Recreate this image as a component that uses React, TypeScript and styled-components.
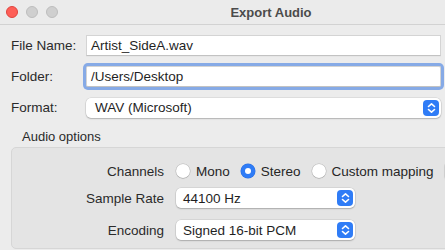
import React from "react";
import styled, { createGlobalStyle } from "styled-components";

const GlobalStyle = createGlobalStyle`
  html, body {
    margin: 0;
    padding: 0;
    overflow: hidden;
    background: #ececec;
  }
  body {
    font-family: "Liberation Sans", Arial, sans-serif;
    color: #262626;
  }
`;

const Window = styled.div`
  width: 542px;
  height: 250px;
  background: #ececec;
  display: flex;
  flex-direction: column;
`;

const TitleBar = styled.div`
  height: 24px;
  flex: none;
  position: relative;
  display: flex;
  align-items: center;
  justify-content: center;
  border-bottom: 1px solid #d2d2d2;
  background: #ebebeb;
`;

const Lights = styled.div`
  position: absolute;
  left: 6px;
  top: 6px;
  display: flex;
  gap: 8px;
`;

const Light = styled.span<{ $color: string; $edge: string }>`
  width: 12px;
  height: 12px;
  border-radius: 50%;
  box-sizing: border-box;
  background: ${({ $color }) => $color};
  border: 0.5px solid ${({ $edge }) => $edge};
`;

const Title = styled.h1`
  margin: 0;
  font-size: 13px;
  font-weight: bold;
  color: #4b4b4b;
`;

const Form = styled.div`
  display: grid;
  grid-template-columns: 75px 355px;
  grid-auto-rows: 21px;
  row-gap: 10px;
  padding: 10px 0 0 11px;
  align-items: center;
`;

const Label = styled.label`
  font-size: 13.5px;
  color: #2a2a2a;
`;

const TextField = styled.div<{ $focused?: boolean }>`
  height: 21px;
  box-sizing: border-box;
  background: #fff;
  border: 1px solid #d4d4d4;
  border-bottom-color: #c2c2c2;
  padding: 0 4px;
  display: flex;
  align-items: center;
  font-size: 13.5px;
  color: #1f1f1f;
  box-shadow: ${({ $focused }) =>
    $focused ? "0 0 0 3px #86aae6" : "0 0.5px 0 rgba(0,0,0,0.05)"};
  border-radius: ${({ $focused }) => ($focused ? "2px" : "0")};
`;

const Popup = styled.div<{ $width?: number; $pad?: number }>`
  height: 20px;
  width: ${({ $width }) => ($width ? `${$width}px` : "auto")};
  box-sizing: border-box;
  background: #fff;
  border-radius: 5px;
  box-shadow: 0 0 0 0.5px rgba(0, 0, 0, 0.12), 0 1px 1.5px rgba(0, 0, 0, 0.2);
  display: flex;
  align-items: center;
  justify-content: space-between;
  padding: 0 2px 0 ${({ $pad }) => $pad ?? 7}px;
  font-size: 13.5px;
  color: #1f1f1f;
`;

const Stepper = styled.span`
  width: 16px;
  height: 16px;
  border-radius: 4px;
  background: #2f7cf6;
  display: flex;
  align-items: center;
  justify-content: center;
`;

const SectionTitle = styled.div`
  font-size: 13px;
  color: #2a2a2a;
  margin: 11px 0 0 22px;
  line-height: 16px;
`;

const Box = styled.div`
  margin: 2px 0 0 11px;
  width: 600px;
  height: 102px;
  box-sizing: border-box;
  background: #e4e4e4;
  border: 1px solid #d6d6d6;
  border-radius: 5px;
  padding-top: 13px;
  display: flex;
  flex-direction: column;
`;

const OptionRow = styled.div<{ $top?: number }>`
  display: grid;
  grid-template-columns: 152px auto;
  column-gap: 12px;
  align-items: center;
  height: 20px;
  margin-top: ${({ $top }) => $top ?? 0}px;
`;

const OptionLabel = styled.span`
  text-align: right;
  font-size: 13.5px;
  color: #2a2a2a;
`;

const Radios = styled.div`
  display: flex;
  align-items: center;
  gap: 11px;
`;

const RadioItem = styled.span`
  display: flex;
  align-items: center;
  gap: 6px;
  font-size: 13.5px;
  color: #262626;
`;

const RadioDot = styled.span<{ $on?: boolean }>`
  width: 14px;
  height: 14px;
  border-radius: 50%;
  box-sizing: border-box;
  background: ${({ $on }) => ($on ? "#2f7cf6" : "#fff")};
  box-shadow: ${({ $on }) =>
    $on
      ? "0 0 0 0.5px #2a6fe0"
      : "0 0 0 0.5px rgba(0,0,0,0.18), 0 0.5px 1px rgba(0,0,0,0.2)"};
  display: flex;
  align-items: center;
  justify-content: center;
  &::after {
    content: "";
    width: 6px;
    height: 6px;
    border-radius: 50%;
    background: #fff;
    display: ${({ $on }) => ($on ? "block" : "none")};
  }
`;

const Chevrons = () => (
  <svg width="9" height="12" viewBox="0 0 9 12">
    <path
      d="M1.5 4.5 L4.5 1.8 L7.5 4.5 M1.5 7.5 L4.5 10.2 L7.5 7.5"
      fill="none"
      stroke="#fff"
      strokeWidth="1.6"
      strokeLinecap="round"
      strokeLinejoin="round"
    />
  </svg>
);

const Radio = ({ label, on }: { label: string; on?: boolean }) => (
  <RadioItem>
    <RadioDot $on={on} />
    {label}
  </RadioItem>
);

export default function App() {
  return (
    <>
      <GlobalStyle />
      <Window>
        <TitleBar>
          <Lights>
            <Light $color="#fe5f57" $edge="#e0443e" />
            <Light $color="#cfcfcf" $edge="#bdbdbd" />
            <Light $color="#cfcfcf" $edge="#bdbdbd" />
          </Lights>
          <Title>Export Audio</Title>
        </TitleBar>

        <Form>
          <Label>File Name:</Label>
          <TextField>Artist_SideA.wav</TextField>
          <Label>Folder:</Label>
          <TextField $focused>/Users/Desktop</TextField>
          <Label>Format:</Label>
          <Popup $pad={9}>
            WAV (Microsoft)
            <Stepper>
              <Chevrons />
            </Stepper>
          </Popup>
        </Form>

        <SectionTitle>Audio options</SectionTitle>
        <Box>
          <OptionRow>
            <OptionLabel>Channels</OptionLabel>
            <Radios>
              <Radio label="Mono" />
              <Radio label="Stereo" on />
              <Radio label="Custom mapping" />
              <Popup $width={60} />
            </Radios>
          </OptionRow>
          <OptionRow $top={7}>
            <OptionLabel>Sample Rate</OptionLabel>
            <Popup $width={179}>
              44100 Hz
              <Stepper>
                <Chevrons />
              </Stepper>
            </Popup>
          </OptionRow>
          <OptionRow $top={12}>
            <OptionLabel>Encoding</OptionLabel>
            <Popup $width={179}>
              Signed 16-bit PCM
              <Stepper>
                <Chevrons />
              </Stepper>
            </Popup>
          </OptionRow>
        </Box>
      </Window>
    </>
  );
}
